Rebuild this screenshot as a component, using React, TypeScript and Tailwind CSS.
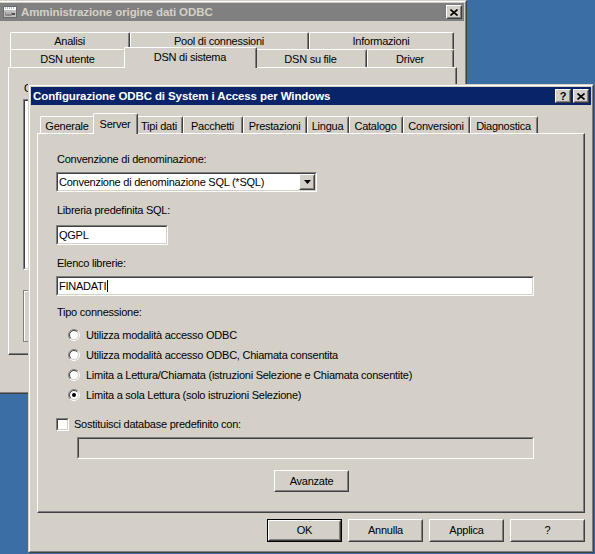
import React from "react";

type Kids = { className?: string; children?: React.ReactNode };

function Raised({ className = "", children }: Kids) {
  return (
    <div className={`border border-t-white border-l-white border-r-[#404040] border-b-[#404040] bg-[#d4d0c8] ${className}`}>
      <div className="flex h-full w-full items-center justify-center border border-t-[#d4d0c8] border-l-[#d4d0c8] border-r-[#808080] border-b-[#808080]">
        {children}
      </div>
    </div>
  );
}

function Sunken({ className = "", inner = "bg-white", children }: Kids & { inner?: string }) {
  return (
    <div className={`border border-t-[#808080] border-l-[#808080] border-r-white border-b-white ${className}`}>
      <div className={`flex h-full w-full items-center border border-t-[#404040] border-l-[#404040] border-r-[#d4d0c8] border-b-[#d4d0c8] ${inner}`}>
        {children}
      </div>
    </div>
  );
}

function Button({ label, def = false, className = "" }: { label: string; def?: boolean; className?: string }) {
  if (def) {
    return (
      <div className={`border border-black ${className}`}>
        <Raised className="h-full w-full">{label}</Raised>
      </div>
    );
  }
  return <Raised className={className}>{label}</Raised>;
}

function Win({ className = "", children }: Kids) {
  return (
    <div className={`absolute border border-t-[#d4d0c8] border-l-[#d4d0c8] border-r-[#404040] border-b-[#404040] bg-[#d4d0c8] ${className}`}>
      <div className="flex h-full w-full flex-col border border-t-white border-l-white border-r-[#808080] border-b-[#808080] p-px">
        {children}
      </div>
    </div>
  );
}

function CloseGlyph() {
  return (
    <svg width="8" height="7" viewBox="0 0 8 7">
      <path d="M0.5 0.5L7.5 6.5M7.5 0.5L0.5 6.5" stroke="#000" strokeWidth="1.6" />
    </svg>
  );
}

function TitleBar({ title, active, icon, help }: { title: string; active: boolean; icon?: React.ReactNode; help?: boolean }) {
  return (
    <div className={`flex h-[18px] shrink-0 items-center pl-[2px] pr-[2px] ${active ? "bg-[#0a246a] text-white" : "bg-[#808080] text-[#d4d0c8]"}`}>
      {icon}
      <span className="font-['Liberation_Sans',Arial,sans-serif] text-[11.5px] font-bold tracking-[-0.1px] whitespace-nowrap">{title}</span>
      <div className="ml-auto flex gap-[2px]">
        {help && (
          <Raised className="h-[14px] w-[16px]">
            <span className="text-[11px] font-bold leading-none text-black">?</span>
          </Raised>
        )}
        <Raised className="h-[14px] w-[16px]">
          <CloseGlyph />
        </Raised>
      </div>
    </div>
  );
}

function OdbcIcon() {
  return (
    <svg width="16" height="16" viewBox="0 0 16 16" className="mr-[3px] shrink-0">
      <rect x="1.5" y="2.5" width="13" height="11" fill="#c0c0c0" stroke="#6b6b6b" />
      <rect x="2" y="3" width="12" height="3" fill="#fff" />
      <path d="M3 4h1M5 4h1M7 4h1M9 4h1M11 4h1" stroke="#5a7fb8" />
      <rect x="3" y="8" width="7" height="4" rx="1" fill="#8a8a8a" />
      <rect x="10" y="9" width="3" height="2" fill="#505050" />
      <path d="M4 9h5" stroke="#d8d8d8" />
    </svg>
  );
}

function Tab({ label, w, sel = false, h = "h-[17px]", pad = "pt-[2px]" }: { label: string; w: string; sel?: boolean; h?: string; pad?: string }) {
  return (
    <div className={`${w} ${sel ? "relative z-10 -mx-[2px] mb-[-1px] h-[21px]" : h} shrink-0 rounded-t-[2px] border-l border-t border-r border-l-white border-t-white border-r-[#404040] bg-[#d4d0c8]`}>
      <div className={`flex h-full items-center justify-center whitespace-nowrap rounded-tr-[2px] border-r border-r-[#808080] ${pad}`}>
        {label}
      </div>
    </div>
  );
}

function Radio({ checked = false }: { checked?: boolean }) {
  const a = 5.5 / Math.SQRT2;
  const b = 4.5 / Math.SQRT2;
  return (
    <svg width="12" height="12" viewBox="0 0 12 12" className="shrink-0">
      <circle cx="6" cy="6" r="4.5" fill="#fff" />
      <path d={`M${6 - a} ${6 + a}A5.5 5.5 0 0 1 ${6 + a} ${6 - a}`} stroke="#808080" fill="none" />
      <path d={`M${6 + a} ${6 - a}A5.5 5.5 0 0 1 ${6 - a} ${6 + a}`} stroke="#fff" fill="none" />
      <path d={`M${6 - b} ${6 + b}A4.5 4.5 0 0 1 ${6 + b} ${6 - b}`} stroke="#404040" fill="none" />
      <path d={`M${6 + b} ${6 - b}A4.5 4.5 0 0 1 ${6 - b} ${6 + b}`} stroke="#d4d0c8" fill="none" />
      {checked && <circle cx="6" cy="6" r="2" fill="#000" />}
    </svg>
  );
}

const frontTabs = [
  { label: "Generale", w: "w-[55px]" },
  { label: "Server", w: "w-[45px]", sel: true },
  { label: "Tipi dati", w: "w-[47px]" },
  { label: "Pacchetti", w: "w-[60px]" },
  { label: "Prestazioni", w: "w-[64px]" },
  { label: "Lingua", w: "w-[42px]" },
  { label: "Catalogo", w: "w-[54px]" },
  { label: "Conversioni", w: "w-[67px]" },
  { label: "Diagnostica", w: "w-[68px]" },
];

const radios = [
  "Utilizza modalità accesso ODBC",
  "Utilizza modalità accesso ODBC, Chiamata consentita",
  "Limita a Lettura/Chiamata (istruzioni Selezione e Chiamata consentite)",
  "Limita a sola Lettura (solo istruzioni Selezione)",
];

function BackWindow() {
  return (
    <Win className="left-[-3px] top-0 h-[394px] w-[470px]">
      <TitleBar title="Amministrazione origine dati ODBC" active={false} icon={<OdbcIcon />} />
      <div className="pl-[8px] pt-[11px]">
        <div className="ml-[2px]">
          <div className="flex h-[17px]">
            <div className="h-[17px] w-[120px] shrink-0 rounded-t-[2px] border-l border-t border-r border-l-white border-t-white border-r-[#404040]">
              <div className="flex h-full items-center justify-center border-r border-r-[#808080] pt-px">Analisi</div>
            </div>
            <div className="h-[17px] w-[179px] shrink-0 rounded-t-[2px] border-l border-t border-r border-l-white border-t-white border-r-[#404040]">
              <div className="flex h-full items-center justify-center border-r border-r-[#808080] pt-px">Pool di connessioni</div>
            </div>
            <div className="h-[17px] w-[145px] shrink-0 rounded-t-[2px] border-l border-t border-r border-l-white border-t-white border-r-[#404040]">
              <div className="flex h-full items-center justify-center border-r border-r-[#808080] pt-px">Informazioni</div>
            </div>
          </div>
          <div className="flex h-[18px] items-end">
            <Tab label="DSN utente" w="w-[116px]" h="h-[18px]" pad="pt-px" />
            <Tab label="DSN di sistema" w="w-[133px]" sel pad="pb-[2px]" />
            <Tab label="DSN su file" w="w-[112px]" h="h-[18px]" pad="pt-px" />
            <Tab label="Driver" w="w-[87px]" h="h-[18px]" pad="pt-px" />
          </div>
        </div>
        <div className="h-[288px] w-[449px] border border-t-white border-l-white border-r-[#404040] border-b-[#404040]">
          <div className="h-full w-full border-r border-b border-r-[#808080] border-b-[#808080] pl-[14px] pt-[14px]">
            <div className="ml-px">Origini dati di sistema:</div>
            <Sunken className="mt-[4px] h-[171px] w-[420px]" />
            <div className="mt-[20px] h-[52px] w-[420px] border border-[#808080]">
              <div className="h-full w-full border-l border-t border-l-white border-t-white" />
            </div>
          </div>
        </div>
      </div>
    </Win>
  );
}

function FrontWindow() {
  return (
    <Win className="left-[28px] top-[84px] z-10 h-[469px] w-[566px]">
      <TitleBar title="Configurazione ODBC di System i Access per Windows" active help />
      <div className="px-[6px] pt-[8px]">
        <div className="flex h-[20px] items-end pl-[3px]">
          {frontTabs.map((t) => (
            <Tab key={t.label} label={t.label} w={t.w} sel={t.sel} pad={t.sel ? "" : "pt-[2px]"} />
          ))}
        </div>
        <div className="h-[380px] w-[548px] border border-t-white border-l-white border-r-[#404040] border-b-[#404040]">
          <div className="h-full w-full border-r border-b border-r-[#808080] border-b-[#808080] pl-[18px] pt-[19px]">
            <div className="ml-px">Convenzione di denominazione:</div>
            <Sunken className="mt-[6px] h-[20px] w-[261px]">
              <span className="flex-1 whitespace-nowrap pl-px">Convenzione di denominazione SQL (*SQL)</span>
              <Raised className="h-full w-[16px]">
                <svg width="7" height="4" viewBox="0 0 7 4">
                  <polygon points="0,0 7,0 3.5,4" fill="#000" />
                </svg>
              </Raised>
            </Sunken>

            <div className="ml-px mt-[12px]">Libreria predefinita SQL:</div>
            <Sunken className="mt-[8px] h-[20px] w-[112px]">
              <span className="pl-px">QGPL</span>
            </Sunken>

            <div className="ml-px mt-[12px]">Elenco librerie:</div>
            <Sunken className="mt-[6px] h-[20px] w-[478px]">
              <span className="pl-px">FINADATI</span>
              <span className="ml-px inline-block h-[12px] w-px bg-black" />
            </Sunken>

            <div className="ml-px mt-[10px]">Tipo connessione:</div>
            <div className="mt-[6px] flex flex-col">
              {radios.map((r, i) => (
                <div key={r} className="flex h-[20px] items-center gap-[6px] pl-[12px] whitespace-nowrap">
                  <Radio checked={i === 3} />
                  <span>{r}</span>
                </div>
              ))}
            </div>

            <div className="mt-[13px] flex h-[13px] items-center gap-[5px]">
              <Sunken className="h-[13px] w-[13px] shrink-0" />
              <span>Sostituisci database predefinito con:</span>
            </div>
            <Sunken className="ml-[21px] mt-[6px] h-[22px] w-[457px]" inner="bg-[#d4d0c8]" />

            <Button label="Avanzate" className="ml-[218px] mt-[11px] h-[22px] w-[75px]" />
          </div>
        </div>
        <div className="mt-[6px] flex justify-end gap-[6px]">
          <Button label="OK" def className="h-[23px] w-[75px]" />
          <Button label="Annulla" className="h-[23px] w-[75px]" />
          <Button label="Applica" className="h-[23px] w-[75px]" />
          <Button label="?" className="h-[23px] w-[75px]" />
        </div>
      </div>
    </Win>
  );
}

export default function App() {
  return (
    <div className="relative h-[554px] w-[595px] overflow-hidden bg-[#3a6ea5] font-['Liberation_Sans',Arial,sans-serif] text-[11px] leading-[13px] tracking-[-0.25px] text-black">
      <BackWindow />
      <FrontWindow />
    </div>
  );
}
